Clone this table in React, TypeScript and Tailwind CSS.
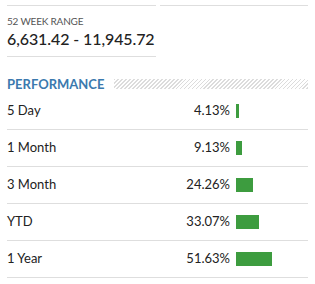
const rows = [
  { label: "5 Day", value: "4.13%", bar: 3 },
  { label: "1 Month", value: "9.13%", bar: 6 },
  { label: "3 Month", value: "24.26%", bar: 17 },
  { label: "YTD", value: "33.07%", bar: 23 },
  { label: "1 Year", value: "51.63%", bar: 36 },
];

export default function App() {
  return (
    <div className="w-[315px] h-[284px] bg-white px-[7px] pt-[5px] font-['Lato',sans-serif] text-[#222]">
      <div className="grid grid-cols-2 gap-[4px]">
        <div className="border-t border-b border-[#dedede] pt-[9px] h-[52px]">
          <div className="text-[10px] leading-[12px] text-[#555] uppercase tracking-[-0.2px]">52 Week Range</div>
          <div className="text-[16px] leading-[20px] mt-[2px] whitespace-nowrap tracking-[-0.1px] font-medium">
            6,631.42 - 11,945.72
          </div>
        </div>
        <div className="border-t border-[#dedede]" />
      </div>

      <div className="flex items-center gap-[10px] mt-[21px] h-[12px]">
        <h2 className="text-[13px] font-bold text-[#3b79ae] leading-none">PERFORMANCE</h2>
        <div className="flex-1 h-[10px] bg-[repeating-linear-gradient(135deg,#dcdcdc_0px,#dcdcdc_1.2px,transparent_1.2px,transparent_2.8px)]" />
      </div>

      <div className="mt-[3px]">
        {rows.map((r) => (
          <div key={r.label} className="flex items-center h-[37px] border-b border-[#dedede] text-[13px]">
            <span className="flex-1">{r.label}</span>
            <span className="w-[80px] text-right">{r.value}</span>
            <span className="w-[78px] pl-[6px] flex">
              <span className="h-[14px] bg-[#3d9c3f]" style={{ width: r.bar }} />
            </span>
          </div>
        ))}
      </div>
    </div>
  );
}
